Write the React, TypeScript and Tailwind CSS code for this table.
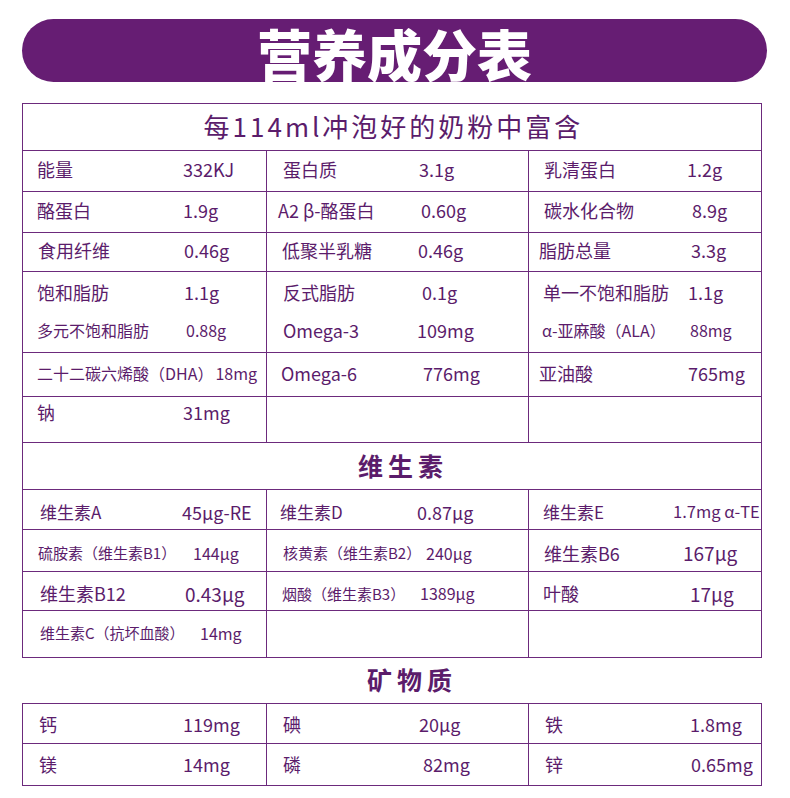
import React from "react";

type Cell = {
  label?: string;
  value?: string;
  pl?: string;
  lw?: string;
  size?: string;
  vsize?: string;
};

const F = "font-['Noto_Sans_CJK_SC','Noto_Sans',sans-serif]";

function CellLine({ c }: { c: Cell }) {
  if (!c.label) return null;
  return (
    <div className={`flex items-center whitespace-nowrap ${c.pl ?? ""}`}>
      <span className={`shrink-0 ${c.lw ?? ""} ${c.size ?? "text-[18px]"}`}>{c.label}</span>
      {c.value ? <span className={c.vsize ?? c.size ?? "text-[18px]"}>{c.value}</span> : null}
    </div>
  );
}

function Row({ cells, h, pad }: { cells: Cell[]; h: string; pad?: string }) {
  return (
    <>
      {cells.map((c, i) => (
        <div key={i} className={`${h} ${pad ?? "pb-[4px]"} flex items-center border-r border-b border-[#6c2a7c]`}>
          <CellLine c={c} />
        </div>
      ))}
    </>
  );
}

export default function App() {
  const grid = "grid grid-cols-[244px_262px_233px]";
  return (
    <div className={`w-[790px] h-[798px] bg-white pt-[19px] ${F} text-[#5b1c6b] leading-none`}>
      <div className="ml-[22px] w-[745px] h-[63px] rounded-full bg-[#661d73] flex items-center justify-center pt-[3px]">
        <span className="text-white text-[55px] font-black leading-none">营养成分表</span>
      </div>

      <div className="mt-[21px] ml-[22px] w-[740px] border-l border-t border-[#6c2a7c]">
        <div className="h-[47px] border-r border-b border-[#6c2a7c] flex items-center justify-center pl-[3px] pb-[3px]">
          <span className="text-[26px] font-normal tracking-[3px]">每114ml冲泡好的奶粉中富含</span>
        </div>
        <div className={grid}>
          <Row
            h="h-[41px]"
            cells={[
              { label: "能量", value: "332KJ", pl: "pl-[14px]", lw: "w-[146px]" },
              { label: "蛋白质", value: "3.1g", pl: "pl-[16px]", lw: "w-[136px]" },
              { label: "乳清蛋白", value: "1.2g", pl: "pl-[15px]", lw: "w-[143px]" },
            ]}
          />
          <Row
            h="h-[41px]"
            cells={[
              { label: "酪蛋白", value: "1.9g", pl: "pl-[14px]", lw: "w-[146px]" },
              { label: "A2 β-酪蛋白", value: "0.60g", pl: "pl-[11px]", lw: "w-[143px]" },
              { label: "碳水化合物", value: "8.9g", pl: "pl-[15px]", lw: "w-[148px]" },
            ]}
          />
          <Row
            h="h-[39px]"
            cells={[
              { label: "食用纤维", value: "0.46g", pl: "pl-[15px]", lw: "w-[146px]" },
              { label: "低聚半乳糖", value: "0.46g", pl: "pl-[15px]", lw: "w-[136px]" },
              { label: "脂肪总量", value: "3.3g", pl: "pl-[10px]", lw: "w-[152px]" },
            ]}
          />
          {[
            [
              { label: "饱和脂肪", value: "1.1g", pl: "pl-[14px]", lw: "w-[147px]" },
              { label: "多元不饱和脂肪", value: "0.88g", pl: "pl-[14px]", lw: "w-[149px]", size: "text-[16px]" },
            ],
            [
              { label: "反式脂肪", value: "0.1g", pl: "pl-[16px]", lw: "w-[139px]" },
              { label: "Omega-3", value: "109mg", pl: "pl-[16px]", lw: "w-[134px]" },
            ],
            [
              { label: "单一不饱和脂肪", value: "1.1g", pl: "pl-[14px]", lw: "w-[145px]" },
              { label: "α-亚麻酸（ALA）", value: "88mg", pl: "pl-[13px]", lw: "w-[148px]", size: "text-[16px]" },
            ],
          ].map((pair, i) => (
            <div key={i} className="h-[81px] flex flex-col pt-[1px] border-r border-b border-[#6c2a7c]">
              <div className="h-[37px] flex items-center">
                <CellLine c={pair[0]} />
              </div>
              <div className="h-[40px] flex items-center">
                <CellLine c={pair[1]} />
              </div>
            </div>
          ))}
          <Row
            h="h-[44px]"
            cells={[
              { label: "二十二碳六烯酸（DHA）", value: "18mg", pl: "pl-[14px]", lw: "pr-[2px]", size: "text-[16px]" },
              { label: "Omega-6", value: "776mg", pl: "pl-[14px]", lw: "w-[142px]" },
              { label: "亚油酸", value: "765mg", pl: "pl-[10px]", lw: "w-[149px]" },
            ]}
          />
          <Row
            h="h-[46px]"
            pad="items-start pt-[6px]"
            cells={[{ label: "钠", value: "31mg", pl: "pl-[14px]", lw: "w-[146px]" }, {}, {}]}
          />
        </div>

        <div className="h-[47px] border-r border-b border-[#6c2a7c] flex items-center pl-[335px] pb-[2px]">
          <span className="text-[25px] font-bold tracking-[5px]">维生素</span>
        </div>
        <div className={grid}>
          <Row
            h="h-[40px]"
            pad="pt-[4px]"
            cells={[
              { label: "维生素A", value: "45μg-RE", pl: "pl-[17px]", lw: "w-[142px]", size: "text-[17px]", vsize: "text-[18px]" },
              { label: "维生素D", value: "0.87μg", pl: "pl-[13px]", lw: "w-[137px]", size: "text-[17px]", vsize: "text-[18px]" },
              { label: "维生素E", value: "1.7mg α-TE", pl: "pl-[14px]", lw: "w-[130px]", size: "text-[17px]", vsize: "text-[16.5px]" },
            ]}
          />
          <Row
            h="h-[42px]"
            pad="pt-[4px]"
            cells={[
              { label: "硫胺素（维生素B1）", value: "144μg", pl: "pl-[15px]", lw: "w-[155px]", size: "text-[15px]", vsize: "text-[16px]" },
              { label: "核黄素（维生素B2）", value: "240μg", pl: "pl-[16px]", lw: "w-[143px]", size: "text-[15px]", vsize: "text-[16px]" },
              { label: "维生素B6", value: "167μg", pl: "pl-[15px]", lw: "w-[139px]", size: "text-[18px]", vsize: "text-[19px]" },
            ]}
          />
          <Row
            h="h-[39px]"
            pad="pt-[4px]"
            cells={[
              { label: "维生素B12", value: "0.43μg", pl: "pl-[17px]", lw: "w-[145px]", size: "text-[18px]", vsize: "text-[19px]" },
              { label: "烟酸（维生素B3）", value: "1389μg", pl: "pl-[15px]", lw: "w-[138px]", size: "text-[15px]", vsize: "text-[16px]" },
              { label: "叶酸", value: "17μg", pl: "pl-[14px]", lw: "w-[147px]", size: "text-[18px]", vsize: "text-[19px]" },
            ]}
          />
          <Row
            h="h-[47px]"
            pad="pb-[3px]"
            cells={[
              { label: "维生素C（抗坏血酸）", value: "14mg", pl: "pl-[17px]", lw: "w-[160px]", size: "text-[15px]", vsize: "text-[16px]" },
              {},
              {},
            ]}
          />
        </div>
      </div>

      <div className="ml-[22px] h-[45px] flex items-center pl-[345px] pb-[2px]">
        <span className="text-[25px] font-bold tracking-[5px]">矿物质</span>
      </div>

      <div className="ml-[22px] w-[740px] border-l border-t border-[#6c2a7c]">
        <div className={grid}>
          <Row
            h="h-[40px]"
            pad="pt-[1px]"
            cells={[
              { label: "钙", value: "119mg", pl: "pl-[16px]", lw: "w-[144px]" },
              { label: "碘", value: "20μg", pl: "pl-[16px]", lw: "w-[136px]" },
              { label: "铁", value: "1.8mg", pl: "pl-[16px]", lw: "w-[145px]" },
            ]}
          />
          <Row
            h="h-[42px]"
            pad="pb-[1px]"
            cells={[
              { label: "镁", value: "14mg", pl: "pl-[16px]", lw: "w-[144px]" },
              { label: "磷", value: "82mg", pl: "pl-[16px]", lw: "w-[140px]" },
              { label: "锌", value: "0.65mg", pl: "pl-[16px]", lw: "w-[146px]" },
            ]}
          />
        </div>
      </div>
    </div>
  );
}
